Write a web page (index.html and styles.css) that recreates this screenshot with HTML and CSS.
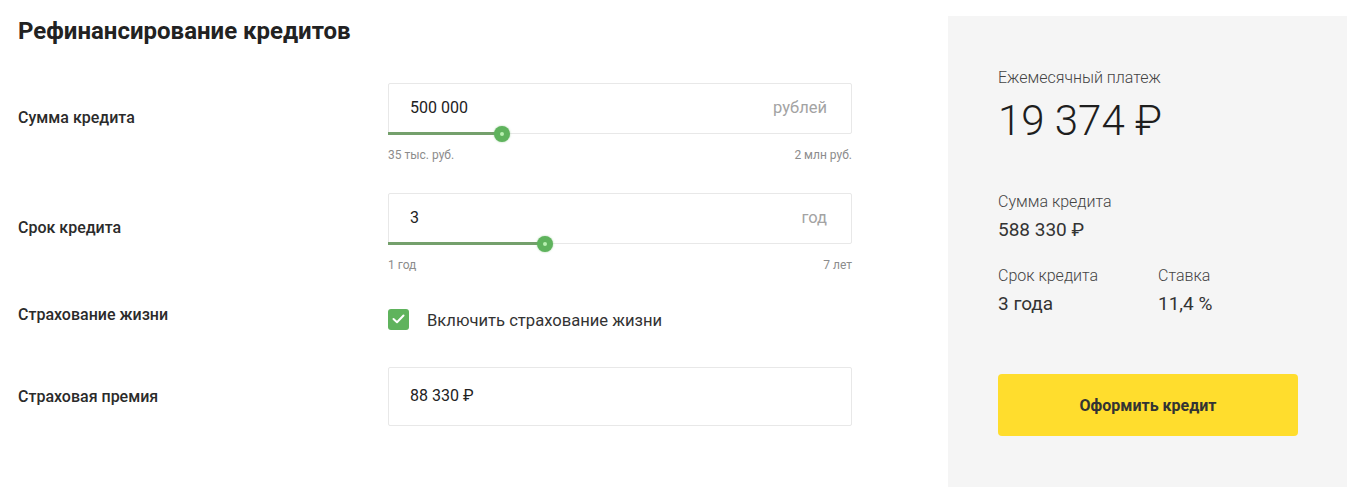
FILE: index.html
```html
<!DOCTYPE html>
<html lang="ru">
<head>
<meta charset="utf-8">
<title>Рефинансирование кредитов</title>
<link rel="stylesheet" href="styles.css">
</head>
<body>
<div class="page">
  <div class="calc">
    <h1 class="title">Рефинансирование кредитов</h1>
    <div class="rows">
      <div class="row">
        <div class="label label-slider">Сумма кредита</div>
        <div class="control">
          <div class="field">
            <span class="value">500 000</span>
            <span class="unit">рублей</span>
            <div class="track"><div class="fill" style="width: 114px"></div><div class="thumb" style="left: 114px"></div></div>
          </div>
          <div class="range"><span>35 тыс. руб.</span><span>2 млн руб.</span></div>
        </div>
      </div>
      <div class="row">
        <div class="label label-slider">Срок кредита</div>
        <div class="control">
          <div class="field">
            <span class="value">3</span>
            <span class="unit">год</span>
            <div class="track"><div class="fill" style="width: 157px"></div><div class="thumb" style="left: 157px"></div></div>
          </div>
          <div class="range"><span>1 год</span><span>7 лет</span></div>
        </div>
      </div>
      <div class="row row-spaced">
        <div class="label label-check">Страхование жизни</div>
        <div class="control">
          <label class="check">
            <span class="box">
              <svg width="13" height="10" viewBox="0 0 13 10"><path d="M1.5 5 L5 8.2 L11.5 1.5" fill="none" stroke="#fff" stroke-width="2" stroke-linecap="round" stroke-linejoin="round"/></svg>
            </span>
            <span class="check-text">Включить страхование жизни</span>
          </label>
        </div>
      </div>
      <div class="row row-spaced">
        <div class="label label-premium">Страховая премия</div>
        <div class="control">
          <div class="field field-tall">
            <span class="value">88 330 ₽</span>
          </div>
        </div>
      </div>
    </div>
  </div>
  <aside class="summary">
    <div class="s-label">Ежемесячный платеж</div>
    <div class="s-big">19 374 ₽</div>
    <div class="s-label s-gap">Сумма кредита</div>
    <div class="s-value">588 330 ₽</div>
    <div class="s-cols">
      <div class="s-col">
        <div class="s-label">Срок кредита</div>
        <div class="s-value">3 года</div>
      </div>
      <div class="s-col">
        <div class="s-label">Ставка</div>
        <div class="s-value">11,4 %</div>
      </div>
    </div>
    <button class="btn" type="button">Оформить кредит</button>
  </aside>
</div>
</body>
</html>
```

FILE: styles.css
```css
* { box-sizing: border-box; }
html, body { margin: 0; padding: 0; background: #fff; }
body {
  font-family: Roboto, "Noto Sans", "Liberation Sans", sans-serif;
  color: #333;
  width: 1353px;
  height: 495px;
  overflow: hidden;
}
.page {
  display: flex;
  padding: 16px 0 0 18px;
}
.calc {
  width: 834px;
}
.title {
  margin: 0;
  font-size: 24px;
  line-height: 30px;
  font-weight: 700;
  color: #222;
}
.rows {
  display: flex;
  flex-direction: column;
  gap: 32px;
  margin-top: 37px;
}
.row {
  display: flex;
}
.row-spaced { margin-top: 5px; }
.label {
  width: 370px;
  font-size: 16px;
  line-height: 20px;
  font-weight: 500;
  color: #2b2b2b;
}
.label-slider { padding-top: 25px; }
.label-check { margin-top: -3px; }
.label-premium { padding-top: 20px; }
.control {
  width: 464px;
}
.field {
  position: relative;
  height: 51px;
  border: 1px solid #e8e8e8;
  border-radius: 2px;
  display: flex;
  align-items: center;
  justify-content: space-between;
  padding: 0 24px 0 21px;
  font-size: 16px;
}
.field-tall {
  height: 59px;
}
.field .value {
  color: #222;
  margin-top: -2px;
}
.field .unit {
  color: #a3a3a3;
  font-size: 16.5px;
  margin-top: -2px;
}
.track {
  position: absolute;
  left: -1px;
  right: -1px;
  bottom: -2px;
  height: 3px;
}
.fill {
  height: 3px;
  background: #74a06c;
}
.thumb {
  position: absolute;
  top: 1.5px;
  width: 16px;
  height: 16px;
  margin: -8px 0 0 -8px;
  border-radius: 50%;
  background: #5fb35d;
  box-shadow: 0 0 2px rgba(95, 179, 93, 0.6);
}
.thumb::after {
  content: "";
  position: absolute;
  left: 6px;
  top: 6px;
  width: 4px;
  height: 4px;
  border-radius: 50%;
  background: #b8f0b0;
}
.range {
  display: flex;
  justify-content: space-between;
  font-size: 12px;
  line-height: 14px;
  color: #8c8c8c;
  margin-top: 14px;
  margin-bottom: -1px;
}
.check {
  display: flex;
  align-items: center;
  gap: 18px;
  height: 22px;
}
.box {
  width: 21px;
  height: 21px;
  border-radius: 3px;
  background: #5fb35d;
  display: flex;
  align-items: center;
  justify-content: center;
}
.check-text {
  font-size: 16.6px;
  color: #333;
  margin-top: 3px;
}
.summary {
  margin-left: 96px;
  width: 399px;
  height: 471px;
  background: #f5f5f5;
  padding: 52px 0 0 50px;
}
.s-label {
  font-size: 16px;
  line-height: 20px;
  font-weight: 300;
  color: #444;
}
.s-big {
  font-size: 42px;
  line-height: 48px;
  font-weight: 300;
  color: #1e1e1e;
  margin-top: 9px;
}
.s-gap { margin-top: 47px; }
.s-value {
  font-size: 19px;
  line-height: 24px;
  color: #333;
  margin-top: 6px;
}
.s-cols {
  display: flex;
  margin-top: 24px;
}
.s-col { width: 160px; }
.btn {
  display: block;
  margin-top: 58px;
  width: 300px;
  height: 62px;
  border: 0;
  border-radius: 4px;
  background: #ffdd2d;
  font-family: inherit;
  font-size: 16px;
  font-weight: 700;
  color: #333;
  cursor: pointer;
}
```
